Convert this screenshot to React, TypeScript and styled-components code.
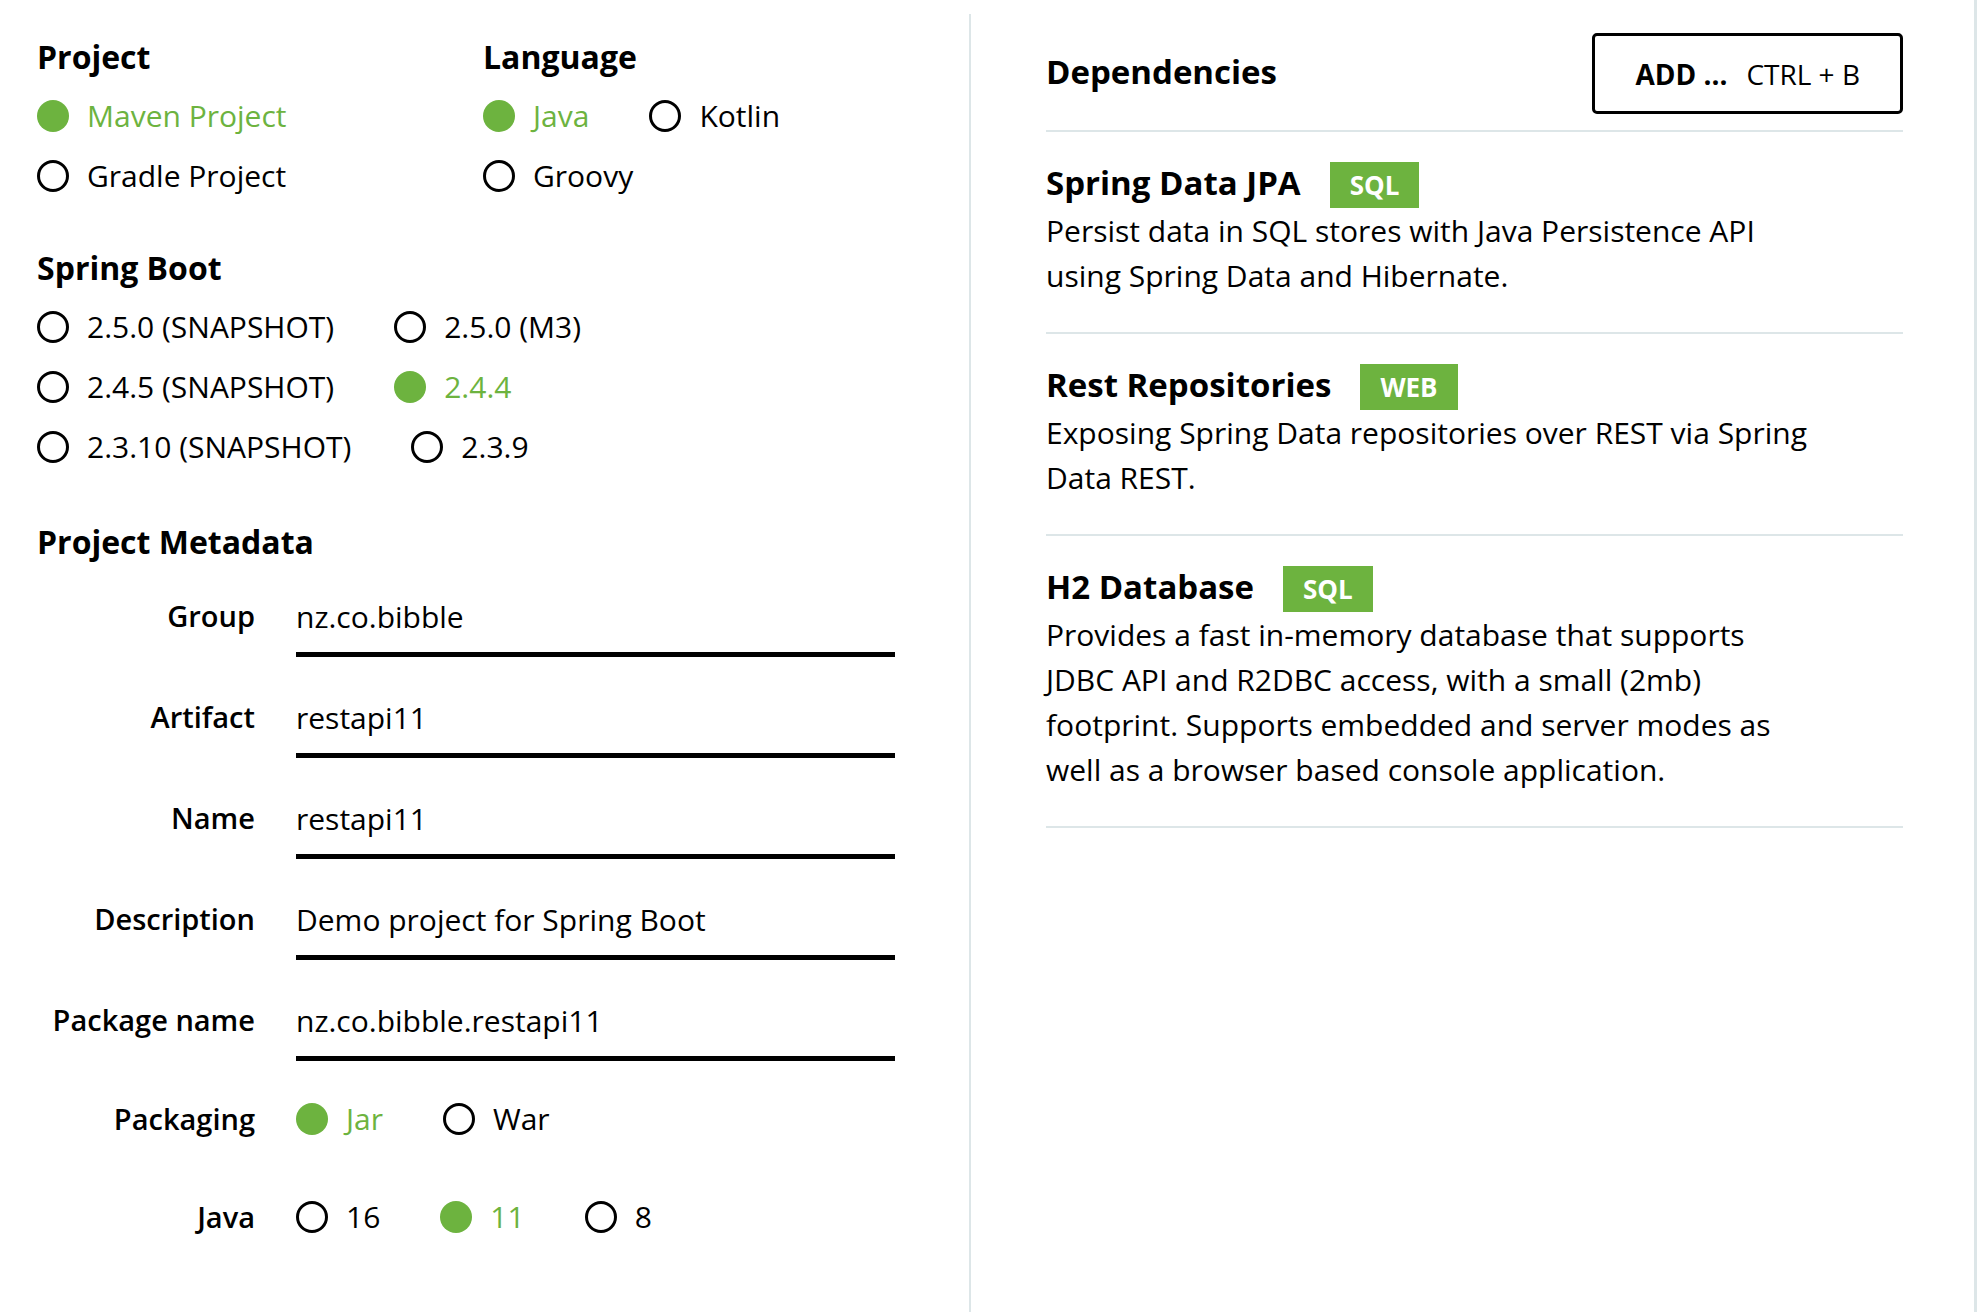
import React from 'react';
import styled, { createGlobalStyle } from 'styled-components';

const GREEN = '#6db33f';
const LINE = '#dde6e8';

const GlobalStyle = createGlobalStyle`
  html, body {
    margin: 0;
    padding: 0;
    background: #fff;
  }
  body {
    font-family: 'Open Sans', 'Liberation Sans', sans-serif;
    color: #000;
  }
  * {
    box-sizing: border-box;
  }
`;

const Page = styled.div`
  display: flex;
  width: 1988px;
  height: 1312px;
  overflow: hidden;
`;

const FormPanel = styled.div`
  width: 971px;
  margin-top: 14px;
  padding: 23px 0 0 37px;
  border-right: 2px solid ${LINE};
`;

const SidePanel = styled.div`
  width: 1006px;
  padding: 0 71px 0 75px;
  border-right: 3px solid ${LINE};
`;

const TopRow = styled.div`
  display: grid;
  grid-template-columns: 446px 1fr;
`;

const Section = styled.section<{ $mt?: number }>`
  margin-top: ${({ $mt }) => $mt ?? 0}px;
`;

const Heading = styled.h2`
  margin: 0 0 19px;
  font-size: 32px;
  font-weight: 700;
  line-height: 40px;
`;

const Options = styled.div<{ $max?: number }>`
  display: flex;
  flex-wrap: wrap;
  column-gap: 60px;
  row-gap: 20px;
  max-width: ${({ $max }) => $max ?? 400}px;
`;

const Option = styled.label<{ $on?: boolean }>`
  display: flex;
  align-items: center;
  gap: 18px;
  height: 40px;
  font-size: 30px;
  line-height: 40px;
  white-space: nowrap;
  color: ${({ $on }) => ($on ? GREEN : '#000')};
`;

const Dot = styled.span<{ $on?: boolean }>`
  flex: none;
  width: 32px;
  height: 32px;
  border-radius: 50%;
  border: ${({ $on }) => ($on ? 'none' : '3.5px solid #000')};
  background: ${({ $on }) => ($on ? GREEN : 'transparent')};
`;

const Fields = styled.div`
  margin-top: 34px;
`;

const Field = styled.div<{ $mb: number }>`
  display: grid;
  grid-template-columns: 218px 599px;
  column-gap: 41px;
  align-items: start;
  margin-bottom: ${({ $mb }) => $mb}px;
`;

const FieldLabel = styled.div`
  text-align: right;
  font-size: 29px;
  font-weight: 600;
  line-height: 40px;
  white-space: nowrap;
`;

const TextInput = styled.input`
  display: block;
  width: 100%;
  height: 61px;
  margin: 0;
  padding: 0 0 16px;
  border: none;
  border-bottom: 5px solid #000;
  outline: none;
  background: transparent;
  font-family: inherit;
  font-size: 30px;
  line-height: 40px;
  color: #000;
`;

const DepsHead = styled.div`
  display: flex;
  justify-content: space-between;
  align-items: center;
  padding: 33px 0 16px;
  border-bottom: 2px solid ${LINE};
`;

const DepsTitle = styled.h2`
  margin: 0 0 4px;
  font-size: 33px;
  font-weight: 700;
  line-height: 40px;
`;

const AddButton = styled.button`
  display: flex;
  align-items: center;
  gap: 19px;
  height: 81px;
  padding: 0 40px;
  border: 3px solid #000;
  border-radius: 5px;
  background: #fff;
  font-family: inherit;
  font-size: 28px;
  color: #000;
  cursor: pointer;

  strong {
    font-weight: 700;
  }
`;

const Dep = styled.div`
  padding: 30px 0 34px;
  border-bottom: 2px solid ${LINE};
`;

const DepTop = styled.div`
  display: flex;
  align-items: center;
  gap: 29px;
  height: 46px;
`;

const DepName = styled.span`
  padding-bottom: 4px;
  font-size: 33px;
  font-weight: 700;
  line-height: 40px;
`;

const Badge = styled.span`
  display: flex;
  align-items: center;
  height: 46px;
  padding: 0 20px;
  background: ${GREEN};
  color: #fff;
  font-size: 26px;
  font-weight: 700;
`;

const DepText = styled.p`
  margin: 0;
  max-width: 768px;
  font-size: 30px;
  line-height: 45px;
`;

type Choice = { label: string; on?: boolean };

function RadioGroup({ items, max }: { items: Choice[]; max?: number }) {
  return (
    <Options $max={max}>
      {items.map((it) => (
        <Option key={it.label} $on={it.on}>
          <Dot $on={it.on} />
          {it.label}
        </Option>
      ))}
    </Options>
  );
}

const textFields = [
  { label: 'Group', value: 'nz.co.bibble' },
  { label: 'Artifact', value: 'restapi11' },
  { label: 'Name', value: 'restapi11' },
  { label: 'Description', value: 'Demo project for Spring Boot' },
  { label: 'Package name', value: 'nz.co.bibble.restapi11' },
];

const deps = [
  {
    name: 'Spring Data JPA',
    tag: 'SQL',
    text: 'Persist data in SQL stores with Java Persistence API using Spring Data and Hibernate.',
  },
  {
    name: 'Rest Repositories',
    tag: 'WEB',
    text: 'Exposing Spring Data repositories over REST via Spring Data REST.',
  },
  {
    name: 'H2 Database',
    tag: 'SQL',
    text: 'Provides a fast in-memory database that supports JDBC API and R2DBC access, with a small (2mb) footprint. Supports embedded and server modes as well as a browser based console application.',
  },
];

export default function App(): JSX.Element {
  return (
    <>
      <GlobalStyle />
      <Page>
        <FormPanel>
          <TopRow>
            <Section>
              <Heading>Project</Heading>
              <RadioGroup items={[{ label: 'Maven Project', on: true }, { label: 'Gradle Project' }]} />
            </Section>
            <Section>
              <Heading>Language</Heading>
              <RadioGroup items={[{ label: 'Java', on: true }, { label: 'Kotlin' }, { label: 'Groovy' }]} />
            </Section>
          </TopRow>

          <Section $mt={52}>
            <Heading>Spring Boot</Heading>
            <RadioGroup
              max={700}
              items={[
                { label: '2.5.0 (SNAPSHOT)' },
                { label: '2.5.0 (M3)' },
                { label: '2.4.5 (SNAPSHOT)' },
                { label: '2.4.4', on: true },
                { label: '2.3.10 (SNAPSHOT)' },
                { label: '2.3.9' },
              ]}
            />
          </Section>

          <Section $mt={55}>
            <Heading>Project Metadata</Heading>
            <Fields>
              {textFields.map((f, i) => (
                <Field key={f.label} $mb={i === textFields.length - 1 ? 38 : 40}>
                  <FieldLabel>{f.label}</FieldLabel>
                  <TextInput readOnly defaultValue={f.value} />
                </Field>
              ))}
              <Field $mb={58}>
                <FieldLabel>Packaging</FieldLabel>
                <RadioGroup max={560} items={[{ label: 'Jar', on: true }, { label: 'War' }]} />
              </Field>
              <Field $mb={0}>
                <FieldLabel>Java</FieldLabel>
                <RadioGroup max={560} items={[{ label: '16' }, { label: '11', on: true }, { label: '8' }]} />
              </Field>
            </Fields>
          </Section>
        </FormPanel>

        <SidePanel>
          <DepsHead>
            <DepsTitle>Dependencies</DepsTitle>
            <AddButton type="button">
              <strong>ADD ...</strong>
              <span>CTRL + B</span>
            </AddButton>
          </DepsHead>
          {deps.map((d) => (
            <Dep key={d.name}>
              <DepTop>
                <DepName>{d.name}</DepName>
                <Badge>{d.tag}</Badge>
              </DepTop>
              <DepText>{d.text}</DepText>
            </Dep>
          ))}
        </SidePanel>
      </Page>
    </>
  );
}
